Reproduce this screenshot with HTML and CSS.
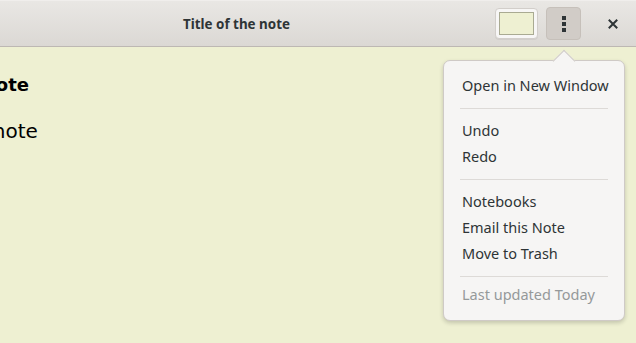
FILE: index.html
```html
<!DOCTYPE html>
<html>
<head>
<meta charset="utf-8">
<link rel="stylesheet" href="styles.css">
</head>
<body>
<div class="window">
  <header class="headerbar">
    <div class="title">Title of the note</div>
    <div class="actions">
      <button class="swatch"><span class="swatch-fill"></span></button>
      <button class="menu-btn"><span class="dot"></span><span class="dot"></span><span class="dot"></span></button>
      <button class="close">
        <svg width="10" height="10" viewBox="0 0 10 10"><path d="M1.5 1.5 L8.5 8.5 M8.5 1.5 L1.5 8.5" stroke="#2e3436" stroke-width="2" stroke-linecap="square"/></svg>
      </button>
    </div>
  </header>
  <main class="note">
    <div class="note-text">
      <p class="note-title">Title of the note</p>
      <p class="note-body">Content of the note</p>
    </div>
  </main>
  <div class="popover">
    <div class="arrow"></div>
    <ul class="menu">
      <li class="item">Open in New Window</li>
      <li class="sep"></li>
      <li class="item">Undo</li>
      <li class="item">Redo</li>
      <li class="sep"></li>
      <li class="item">Notebooks</li>
      <li class="item">Email this Note</li>
      <li class="item">Move to Trash</li>
      <li class="sep sep-last"></li>
      <li class="item muted">Last updated Today</li>
    </ul>
  </div>
</div>
</body>
</html>
```
FILE: styles.css
```css
* { box-sizing: border-box; }
html, body { margin: 0; padding: 0; }
body {
  width: 636px;
  height: 343px;
  overflow: hidden;
  font-family: "Noto Sans", "DejaVu Sans", sans-serif;
  background: #eef0d2;
}
.window { position: relative; width: 636px; height: 343px; display: flex; flex-direction: column; }
.headerbar {
  height: 47px;
  flex: none;
  background: linear-gradient(#e9e7e4, #dbd8d4);
  border-top: 1px solid #f0eeec;
  border-bottom: 1px solid #bdb8b3;
  display: flex;
  align-items: center;
  position: relative;
}
.title {
  position: absolute;
  left: 0;
  width: 473px;
  text-align: center;
  font-weight: bold;
  font-size: 13.4px;
  color: #2e3436;
}
.actions {
  margin-left: auto;
  display: flex;
  align-items: center;
  padding-right: 9px;
}
button { font: inherit; padding: 0; margin: 0; border: none; background: none; }
.swatch {
  width: 43px; height: 31px;
  background: #f7f6f5;
  border: 1px solid #d2ceca;
  border-radius: 4px;
  display: flex; align-items: center; justify-content: center;
  box-shadow: 0 1px 0 rgba(0,0,0,0.05);
}
.swatch-fill {
  width: 35px; height: 23px;
  background: #eef0d2;
  border: 1px solid #a9aa92;
}
.menu-btn {
  margin-left: 8px;
  width: 35px; height: 33px;
  background: #d1ccc7;
  border: 1px solid #c6c0ba;
  border-radius: 4px;
  display: flex; flex-direction: column; align-items: center; justify-content: center;
  gap: 2px;
}
.dot { width: 4px; height: 4px; background: #2e3436; display: block; }
.close {
  margin-left: 18px;
  width: 28px; height: 28px;
  display: flex; align-items: center; justify-content: center;
}
.note { flex: 1; overflow: hidden; }
.note-text { margin-left: -135px; padding-top: 25px; white-space: nowrap; font-family: "DejaVu Sans", sans-serif; color: #000; }
.note-title { margin: 0; font-weight: bold; font-size: 18px; line-height: 26px; }
.note-body { margin: 20px 0 0 -23px; font-size: 20px; line-height: 26px; }
.popover {
  position: absolute;
  left: 443px; top: 60px;
  width: 182px; height: 261px;
  background: #f6f5f4;
  border: 1px solid #cfcac6;
  border-radius: 7px;
  box-shadow: 0 2px 4px rgba(0,0,0,0.18);
}
.arrow {
  position: absolute;
  left: 112px; top: -8px;
  width: 16px; height: 16px;
  background: #f6f5f4;
  border-left: 1px solid #cfcac6;
  border-top: 1px solid #cfcac6;
  transform: rotate(45deg);
}
.menu { list-style: none; margin: 0; padding: 11px 0 0; position: relative; }
.item {
  height: 26px; line-height: 26px;
  padding-left: 18px;
  font-size: 14.5px;
  color: #2e3436;
}
.muted { color: #95999a; }
.sep { height: 1px; background: #dddad7; margin: 10px 16px 8px 16px; }
.sep-last { margin-bottom: 4px; }
```
